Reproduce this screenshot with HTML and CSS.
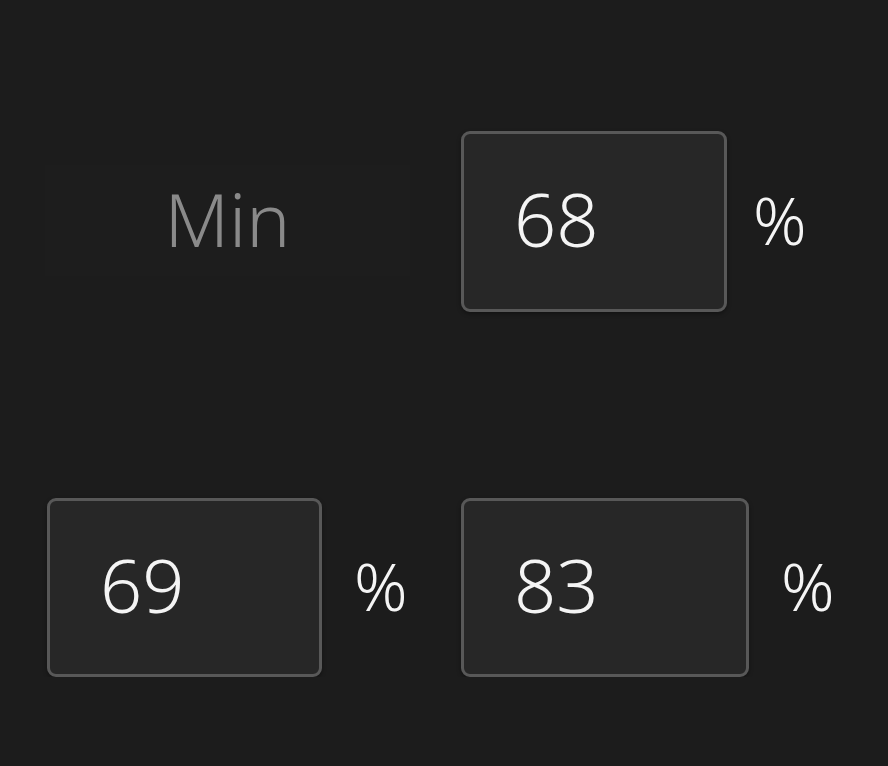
FILE: index.html
```html
<!DOCTYPE html>
<html lang="en">
<head>
    <meta charset="UTF-8">
    <meta name="viewport" content="width=device-width, initial-scale=1.0">
    <title>Range</title>
    <link rel="stylesheet" href="styles.css">
</head>
<body>
    <main class="panel">
        <div class="label">Min</div>
        <div class="field">
            <div class="box box-top">68</div>
            <span class="unit unit-top">%</span>
        </div>
        <div class="field">
            <div class="box box-left">69</div>
            <span class="unit">%</span>
        </div>
        <div class="field">
            <div class="box box-right">83</div>
            <span class="unit">%</span>
        </div>
    </main>
</body>
</html>
```

FILE: styles.css
```css
body {
    margin: 0;
    padding: 0;
    background-color: #1c1c1c;
    font-family: "Noto Sans", "Open Sans", sans-serif;
    font-weight: 300;
    color: #f4f4f4;
}
.panel {
    display: grid;
    grid-template-columns: 414px auto;
    row-gap: 186px;
    padding: 131px 0 0 47px;
}
.label {
    display: flex;
    align-items: center;
    justify-content: center;
    font-size: 74px;
    color: #8a8a8a;
    background-color: #1d1d1d;
    margin: 34px 51px 36px -2px;
    padding-bottom: 4px;
}
.field {
    display: flex;
    align-items: center;
}
.box {
    box-sizing: border-box;
    height: 181px;
    display: flex;
    align-items: center;
    padding-left: 50px;
    padding-bottom: 6px;
    border: 3px solid #585858;
    border-radius: 9px;
    background-color: #272727;
    box-shadow: 0 2px 4px rgba(0, 0, 0, 0.35);
    font-size: 74px;
}
.box-top {
    width: 266px;
}
.box-left {
    width: 275px;
    height: 179px;
}
.box-right {
    width: 288px;
    height: 179px;
}
.unit {
    font-size: 66px;
    margin-left: 32px;
    padding-bottom: 6px;
}
.unit-top {
    margin-left: 26px;
}
```
